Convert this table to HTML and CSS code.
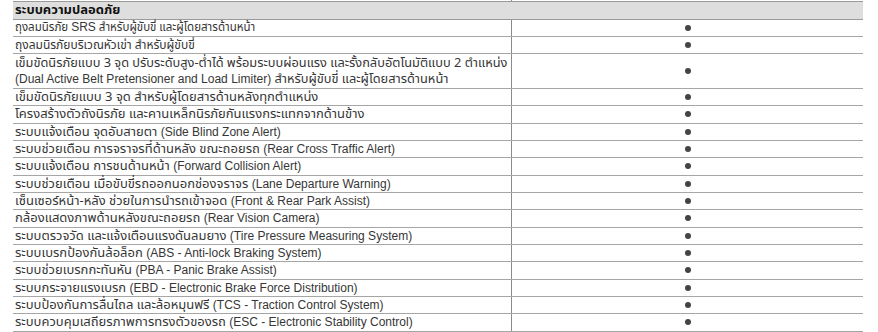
FILE: index.html
```html
<!DOCTYPE html>
<html lang="th">
<head>
<meta charset="utf-8">
<link rel="stylesheet" href="styles.css">
</head>
<body>
<div class="sheet">
  <div class="stub"></div>
  <div class="head">ระบบความปลอดภัย</div>
  <div class="row"><div class="name"><span class="txt narrower">ถุงลมนิรภัย <span class="en">SRS</span> สำหรับผู้ขับขี่ และผู้โดยสารด้านหน้า</span></div><div class="val"><span class="dot"></span></div></div>
  <div class="row"><div class="name"><span class="txt narrow">ถุงลมนิรภัยบริเวณหัวเข่า สำหรับผู้ขับขี่</span></div><div class="val"><span class="dot"></span></div></div>
  <div class="row double"><div class="name"><span class="txt">เข็มขัดนิรภัยแบบ 3 จุด ปรับระดับสูง-ต่ำได้ พร้อมระบบผ่อนแรง และรั้งกลับอัตโนมัติแบบ 2 ตำแหน่ง<br><span class="en">(Dual Active Belt Pretensioner and Load Limiter)</span> สำหรับผู้ขับขี่ และผู้โดยสารด้านหน้า</span></div><div class="val"><span class="dot"></span></div></div>
  <div class="row"><div class="name"><span class="txt">เข็มขัดนิรภัยแบบ 3 จุด สำหรับผู้โดยสารด้านหลังทุกตำแหน่ง</span></div><div class="val"><span class="dot"></span></div></div>
  <div class="row"><div class="name"><span class="txt">โครงสร้างตัวถังนิรภัย และคานเหล็กนิรภัยกันแรงกระแทกจากด้านข้าง</span></div><div class="val"><span class="dot"></span></div></div>
  <div class="row"><div class="name"><span class="txt">ระบบแจ้งเตือน จุดอับสายตา <span class="en">(Side Blind Zone Alert)</span></span></div><div class="val"><span class="dot"></span></div></div>
  <div class="row"><div class="name"><span class="txt">ระบบช่วยเตือน การจราจรที่ด้านหลัง ขณะถอยรถ <span class="en">(Rear Cross Traffic Alert)</span></span></div><div class="val"><span class="dot"></span></div></div>
  <div class="row"><div class="name"><span class="txt">ระบบแจ้งเตือน การชนด้านหน้า <span class="en">(Forward Collision Alert)</span></span></div><div class="val"><span class="dot"></span></div></div>
  <div class="row"><div class="name"><span class="txt">ระบบช่วยเตือน เมื่อขับขี่รถออกนอกช่องจราจร <span class="en">(Lane Departure Warning)</span></span></div><div class="val"><span class="dot"></span></div></div>
  <div class="row"><div class="name"><span class="txt">เซ็นเซอร์หน้า-หลัง ช่วยในการนำรถเข้าจอด <span class="en">(Front &amp; Rear Park Assist)</span></span></div><div class="val"><span class="dot"></span></div></div>
  <div class="row"><div class="name"><span class="txt">กล้องแสดงภาพด้านหลังขณะถอยรถ <span class="en">(Rear Vision Camera)</span></span></div><div class="val"><span class="dot"></span></div></div>
  <div class="row"><div class="name"><span class="txt">ระบบตรวจวัด และแจ้งเตือนแรงดันลมยาง <span class="en">(Tire Pressure Measuring System)</span></span></div><div class="val"><span class="dot"></span></div></div>
  <div class="row"><div class="name"><span class="txt">ระบบเบรกป้องกันล้อล็อก <span class="en">(ABS - Anti-lock Braking System)</span></span></div><div class="val"><span class="dot"></span></div></div>
  <div class="row"><div class="name"><span class="txt">ระบบช่วยเบรกกะทันหัน <span class="en">(PBA - Panic Brake Assist)</span></span></div><div class="val"><span class="dot"></span></div></div>
  <div class="row"><div class="name"><span class="txt">ระบบกระจายแรงเบรก <span class="en">(EBD - Electronic Brake Force Distribution)</span></span></div><div class="val"><span class="dot"></span></div></div>
  <div class="row"><div class="name"><span class="txt">ระบบป้องกันการลื่นไถล และล้อหมุนฟรี <span class="en">(TCS - Traction Control System)</span></span></div><div class="val"><span class="dot"></span></div></div>
  <div class="row"><div class="name"><span class="txt">ระบบควบคุมเสถียรภาพการทรงตัวของรถ <span class="en">(ESC - Electronic Stability Control)</span></span></div><div class="val"><span class="dot"></span></div></div>
</div>
</body>
</html>
```
FILE: styles.css
```css
html, body {
  margin: 0;
  padding: 0;
  background: #ffffff;
}
.sheet {
  margin-left: 13px;
  width: 850px;
  font-family: "Noto Sans Thai", "Liberation Sans", sans-serif;
  font-size: 13px;
  color: #363636;
}
.en {
  font-family: "Liberation Sans", sans-serif;
  font-size: 12px;
  line-height: 14px;
}
.stub {
  height: 1px;
  width: 499px;
  border-right: 1px solid #8a8a8a;
  box-sizing: border-box;
}
.head {
  box-sizing: border-box;
  height: 18.6px;
  border-top: 1px solid #9a9a9a;
  border-bottom: 1px solid #9a9a9a;
  background: #dedede;
  padding-left: 2px;
  font-weight: bold;
  color: #111;
  line-height: 16px;
}
.row {
  box-sizing: border-box;
  height: 17.33px;
  display: flex;
  border-bottom: 1px solid #a6a6a6;
}
.row.double {
  height: 34.66px;
}
.name {
  box-sizing: border-box;
  width: 499px;
  padding-left: 2px;
  border-right: 1px solid #8a8a8a;
  white-space: nowrap;
  display: flex;
  align-items: center;
}
.txt {
  line-height: 16.3px;
}
.double .txt {
  font-size: 12.8px;
}
.txt.narrow {
  font-size: 12px;
}
.txt.narrower {
  font-size: 11.5px;
}
.val {
  flex: 1;
  display: flex;
  align-items: center;
  justify-content: center;
}
.dot {
  width: 6px;
  height: 6px;
  border-radius: 50%;
  background: #444;
}
```
